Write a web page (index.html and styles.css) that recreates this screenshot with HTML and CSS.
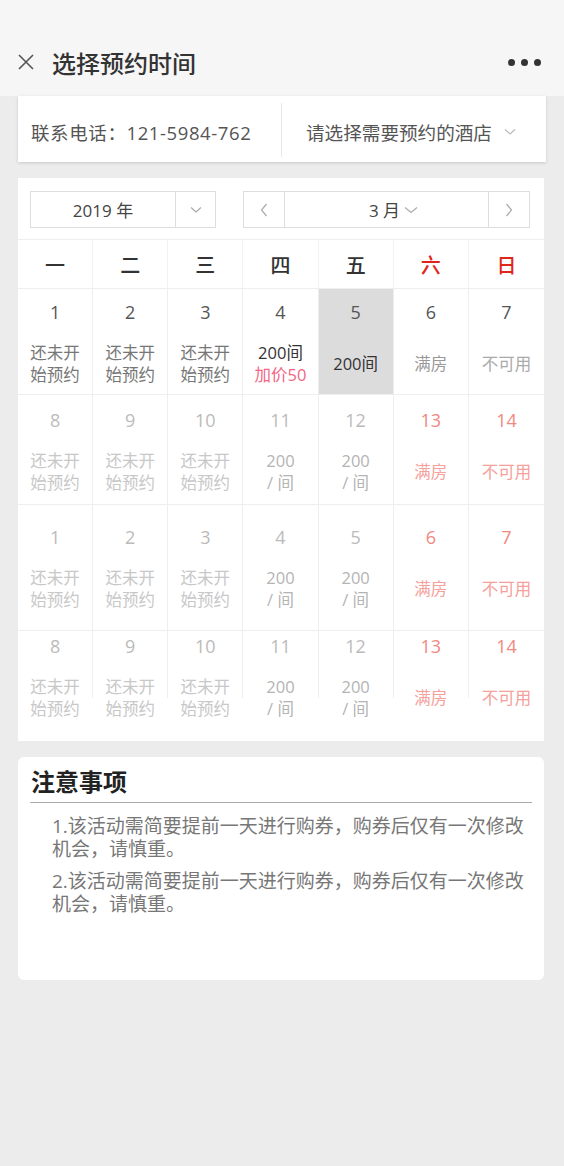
FILE: index.html
```html
<!DOCTYPE html>
<html>
<head>
	<meta charset="utf-8">
	<title>选择预约时间</title>
	<link rel="stylesheet" href="styles.css">
</head>
<body>
	<div class="topbar">
		<svg class="close-icon" width="18" height="18" viewBox="0 0 18 18">
			<path d="M2 2 L16 16 M16 2 L2 16" stroke="#555" stroke-width="1.6" fill="none"/>
		</svg>
		<div class="page-title">选择预约时间</div>
		<div class="more-dots"><span></span><span></span><span></span></div>
	</div>

	<div class="contact-card">
		<div class="phone">联系电话：121-5984-762</div>
		<div class="hotel-pick">
			请选择需要预约的酒店
			<svg width="12" height="8" viewBox="0 0 12 8"><path d="M1 1.5 L6 6 L11 1.5" stroke="#bbb" stroke-width="1.2" fill="none"/></svg>
		</div>
	</div>

	<div class="calendar">
		<div class="selects">
			<div class="year-box">
				<div class="year-text">2019 年</div>
				<div class="year-arrow">
					<svg width="12" height="8" viewBox="0 0 12 8"><path d="M1 1.5 L6 6 L11 1.5" stroke="#aaa" stroke-width="1.2" fill="none"/></svg>
				</div>
			</div>
			<div class="month-box">
				<div class="month-btn">
					<svg width="8" height="14" viewBox="0 0 8 14"><path d="M6.5 1 L1.5 7 L6.5 13" stroke="#aaa" stroke-width="1.2" fill="none"/></svg>
				</div>
				<div class="month-text"><span>3&nbsp;月</span>
					<svg width="14" height="8" viewBox="0 0 14 8"><path d="M1 1.5 L7 6.5 L13 1.5" stroke="#aaa" stroke-width="1.2" fill="none"/></svg>
				</div>
				<div class="month-btn">
					<svg width="8" height="14" viewBox="0 0 8 14"><path d="M1.5 1 L6.5 7 L1.5 13" stroke="#aaa" stroke-width="1.2" fill="none"/></svg>
				</div>
			</div>
		</div>

		<div class="weekdays">
			<div>一</div><div>二</div><div>三</div><div>四</div><div>五</div>
			<div class="weekend">六</div><div class="weekend">日</div>
		</div>

		<div class="week week1">
			<div class="day"><div class="num">1</div><div class="info grey">还未开<br>始预约</div></div>
			<div class="day"><div class="num">2</div><div class="info grey">还未开<br>始预约</div></div>
			<div class="day"><div class="num">3</div><div class="info grey">还未开<br>始预约</div></div>
			<div class="day"><div class="num">4</div><div class="info dark">200间<br><span class="extra">加价50</span></div></div>
			<div class="day picked"><div class="num">5</div><div class="info dark">200间</div></div>
			<div class="day"><div class="num">6</div><div class="info full">满房</div></div>
			<div class="day"><div class="num">7</div><div class="info off">不可用</div></div>
		</div>

		<div class="week week2 faded">
			<div class="day"><div class="num">8</div><div class="info">还未开<br>始预约</div></div>
			<div class="day"><div class="num">9</div><div class="info">还未开<br>始预约</div></div>
			<div class="day"><div class="num">10</div><div class="info">还未开<br>始预约</div></div>
			<div class="day"><div class="num">11</div><div class="info price">200<br>/ 间</div></div>
			<div class="day"><div class="num">12</div><div class="info price">200<br>/ 间</div></div>
			<div class="day red"><div class="num">13</div><div class="info">满房</div></div>
			<div class="day red"><div class="num">14</div><div class="info">不可用</div></div>
		</div>

		<div class="week week3 faded">
			<div class="day"><div class="num">1</div><div class="info">还未开<br>始预约</div></div>
			<div class="day"><div class="num">2</div><div class="info">还未开<br>始预约</div></div>
			<div class="day"><div class="num">3</div><div class="info">还未开<br>始预约</div></div>
			<div class="day"><div class="num">4</div><div class="info price">200<br>/ 间</div></div>
			<div class="day"><div class="num">5</div><div class="info price">200<br>/ 间</div></div>
			<div class="day red"><div class="num">6</div><div class="info">满房</div></div>
			<div class="day red"><div class="num">7</div><div class="info">不可用</div></div>
		</div>

		<div class="week week4 faded">
			<div class="day"><div class="num">8</div><div class="info">还未开<br>始预约</div></div>
			<div class="day"><div class="num">9</div><div class="info">还未开<br>始预约</div></div>
			<div class="day"><div class="num">10</div><div class="info">还未开<br>始预约</div></div>
			<div class="day"><div class="num">11</div><div class="info price">200<br>/ 间</div></div>
			<div class="day"><div class="num">12</div><div class="info price">200<br>/ 间</div></div>
			<div class="day red"><div class="num">13</div><div class="info">满房</div></div>
			<div class="day red"><div class="num">14</div><div class="info">不可用</div></div>
		</div>
	</div>

	<div class="notes">
		<div class="notes-title">注意事项</div>
		<div class="notes-item">1.该活动需简要提前一天进行购券，购券后仅有一次修改机会，请慎重。</div>
		<div class="notes-item">2.该活动需简要提前一天进行购券，购券后仅有一次修改机会，请慎重。</div>
	</div>
</body>
</html>
```

FILE: styles.css
```css
body {
	margin: 0;
	background-color: #ececec;
	font-family: "Open Sans", "Noto Sans CJK SC", sans-serif;
	color: #333;
}

.topbar {
	height: 56px;
	padding: 34px 23px 6px 17px;
	display: flex;
	align-items: center;
	background-color: #f6f6f6;
}

.close-icon {
	display: block;
}

.page-title {
	margin-left: 17px;
	font-size: 24px;
	font-weight: 500;
	color: #333;
	flex: 1;
}

.more-dots {
	display: flex;
	gap: 6px;
}

.more-dots span {
	width: 7px;
	height: 7px;
	border-radius: 50%;
	background-color: #333;
}

.contact-card {
	margin: 0 18px;
	height: 66px;
	display: flex;
	background-color: #fff;
	box-shadow: 0 1px 3px rgba(0, 0, 0, 0.15);
}

.phone {
	width: 250px;
	padding: 5px 0 0 13px;
	display: flex;
	align-items: center;
	font-size: 18.5px;
	letter-spacing: 0.6px;
	color: #555;
}

.hotel-pick {
	flex: 1;
	margin: 7px 0 5px 0;
	padding: 3px 0 0 24px;
	border-left: 1px solid #e8e8e8;
	display: flex;
	align-items: center;
	gap: 12px;
	font-size: 18.6px;
	color: #555;
}

.calendar {
	margin: 16px 20px 0 18px;
	padding: 13px 0 43px 0;
	background-color: #fff;
}

.selects {
	display: flex;
	gap: 27px;
	padding: 0 14px 0 12px;
	margin-bottom: 11px;
}

.year-box,
.month-box {
	height: 35px;
	border: 1px solid #ddd;
	display: flex;
	font-size: 17px;
	color: #444;
}

.year-box {
	width: 184px;
}

.year-text {
	flex: 1;
	display: flex;
	align-items: center;
	justify-content: center;
}

.year-arrow {
	width: 39px;
	border-left: 1px solid #ddd;
	display: flex;
	align-items: center;
	justify-content: center;
}

.month-box {
	flex: 1;
}

.month-btn {
	width: 40px;
	display: flex;
	align-items: center;
	justify-content: center;
}

.month-btn:first-child {
	border-right: 1px solid #ddd;
}

.month-btn:last-child {
	border-left: 1px solid #ddd;
}

.month-text {
	flex: 1;
	display: flex;
	align-items: center;
	justify-content: center;
	gap: 4px;
	padding-left: 14px;
}

.weekdays {
	display: grid;
	grid-template-columns: repeat(7, 1fr);
	height: 48px;
	border-top: 1px solid #eee;
	border-bottom: 1px solid #eee;
}

.weekdays div {
	display: flex;
	align-items: center;
	justify-content: center;
	font-size: 20px;
	font-weight: 500;
	color: #333;
	border-right: 1px solid #f2f2f2;
}

.weekdays div:last-child {
	border-right: none;
}

.weekdays .weekend {
	color: #e0251b;
}

.week {
	display: grid;
	grid-template-columns: repeat(7, 1fr);
	border-bottom: 1px solid #eee;
}

.day {
	display: flex;
	flex-direction: column;
	align-items: center;
	border-right: 1px solid #eee;
}

.day:last-child {
	border-right: none;
}

.num {
	flex-shrink: 0;
	font-size: 18px;
	line-height: 24px;
	color: #555;
}

.info {
	flex-shrink: 0;
	margin-top: 18px;
	height: 44px;
	display: flex;
	flex-direction: column;
	justify-content: center;
	text-align: center;
	font-size: 16.5px;
	line-height: 22px;
	color: #777;
}

.week1 { height: 105px; }
.week1 .day { padding-top: 11px; }
.week2 { height: 109px; }
.week2 .day { padding-top: 13px; }
.week3 { height: 125px; }
.week3 .day { padding-top: 20px; }
.week4 { height: 67px; border-bottom: none; }
.week4 .day { padding-top: 3px; height: 64px; }

.info.dark { color: #333; }
.info.full { color: #999; }
.info.off { color: #aaa; }

.extra {
	color: #f26685;
}

.picked {
	background-color: #dcdcdc;
}

.faded .num { color: #bbb; }
.faded .info { color: #c8c8c8; }
.faded .info.price { color: #b4b4b4; }
.faded .red .num { color: #f08a80; }
.faded .red .info { color: #f5a09a; }

.notes {
	margin: 16px 20px 0 18px;
	height: 213px;
	padding: 10px 12px 0 12px;
	background-color: #fff;
	border-radius: 6px;
}

.notes-title {
	font-size: 24px;
	font-weight: 700;
	line-height: 30px;
	color: #222;
	padding-left: 1px;
	padding-bottom: 5px;
	border-bottom: 1px solid #aaa;
	margin-bottom: 12px;
}

.notes-item {
	padding-left: 22px;
	padding-right: 2px;
	font-size: 19px;
	line-height: 23px;
	color: #777;
	margin-bottom: 9px;
}
```
